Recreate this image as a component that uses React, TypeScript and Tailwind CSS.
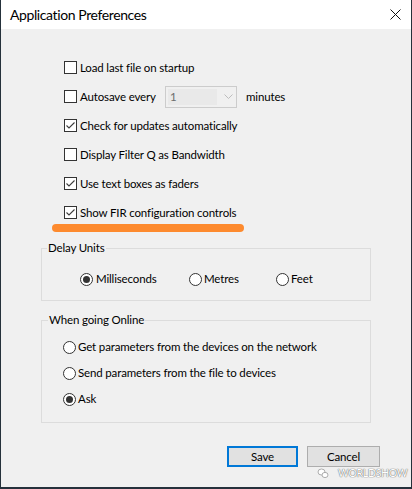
import React from 'react'

const font = { fontFamily: '"Segoe UI", Lato, "Liberation Sans", sans-serif' }

function CheckBox({ checked }: { checked?: boolean }) {
  return (
    <span className="w-[13px] h-[13px] border border-[#333333] bg-white flex items-center justify-center shrink-0">
      {checked && (
        <svg width="11" height="11" viewBox="0 0 11 11" fill="none" stroke="#3c3c3c" strokeWidth="1.1">
          <path d="M1.5 5.5 L4 8 L9.5 2.5" />
        </svg>
      )}
    </span>
  )
}

function Radio({ checked }: { checked?: boolean }) {
  return (
    <span className="w-[13px] h-[13px] rounded-full border border-[#333333] bg-white flex items-center justify-center shrink-0">
      {checked && <span className="w-[7px] h-[7px] rounded-full bg-[#333333]" />}
    </span>
  )
}

function CheckRow({ label, checked }: { label: string; checked?: boolean }) {
  return (
    <div className="h-[29px] flex items-center gap-[3px]">
      <CheckBox checked={checked} />
      <span>{label}</span>
    </div>
  )
}

export default function App() {
  return (
    <div
      className="w-[412px] h-[489px] bg-[#f0f0f0] border-l border-r border-b-2 border-[#25313b] flex flex-col text-[11.5px] tracking-[-0.15px] text-black relative"
      style={font}
    >
      {/* Title bar */}
      <div className="h-[29px] bg-white flex items-center justify-between pl-[9px] pr-[10px] shrink-0">
        <span className="text-[14px] tracking-[-0.4px] leading-none">Application Preferences</span>
        <svg width="11" height="11" viewBox="0 0 11 11" stroke="#111" strokeWidth="1">
          <line x1="0.5" y1="0.5" x2="10.5" y2="10.5" />
          <line x1="10.5" y1="0.5" x2="0.5" y2="10.5" />
        </svg>
      </div>

      {/* Checkboxes */}
      <div className="pt-[24px] pl-[63px] flex flex-col">
        <CheckRow label="Load last file on startup" />
        <div className="h-[29px] flex items-center gap-[3px]">
          <CheckBox />
          <span className="w-[82px]">Autosave every</span>
          <div className="w-[72px] h-[22px] border border-[#cccccc] bg-[#f0f0f0] flex items-center p-[2px]">
            <div className="w-[49px] h-full bg-[#e9e9e9] text-[#6d6d6d] pl-[2px] flex items-center">1</div>
            <svg className="ml-[7px]" width="9" height="6" viewBox="0 0 9 6" fill="none" stroke="#bdbdbd" strokeWidth="1">
              <path d="M0.5 0.5 L4.5 4.5 L8.5 0.5" />
            </svg>
          </div>
          <span className="ml-[6px]">minutes</span>
        </div>
        <CheckRow label="Check for updates automatically" checked />
        <CheckRow label="Display Filter Q as Bandwidth" />
        <CheckRow label="Use text boxes as faders" checked />
        <CheckRow label="Show FIR configuration controls" checked />
      </div>

      {/* Orange highlight */}
      <div className="-mt-[3px] ml-[51px] w-[192px] h-[8px] rounded-full bg-[#fd8a2e] shrink-0" />

      {/* Groups */}
      <div className="px-[40px] pt-[8px] flex flex-col">
        <fieldset className="border border-[#dcdcdc] pt-[13px] pb-[11px]">
          <legend className="ml-[5px] px-[1px] leading-[16px]">Delay Units</legend>
          <div className="h-[20px] pl-[38px] flex items-center">
            <div className="w-[109px] flex items-center gap-[3px]">
              <Radio checked />
              <span>Milliseconds</span>
            </div>
            <div className="w-[87px] flex items-center gap-[2px]">
              <Radio />
              <span>Metres</span>
            </div>
            <div className="flex items-center gap-[2px]">
              <Radio />
              <span>Feet</span>
            </div>
          </div>
        </fieldset>

        <fieldset className="mt-[11px] border border-[#dcdcdc] pt-[6px] pb-[10px]">
          <legend className="ml-[6px] px-[1px] leading-[16px]">When going Online</legend>
          <div className="pl-[21px] flex flex-col">
            <div className="h-[26px] flex items-center gap-[2px]">
              <Radio />
              <span>Get parameters from the devices on the network</span>
            </div>
            <div className="h-[26px] flex items-center gap-[2px]">
              <Radio />
              <span>Send parameters from the file to devices</span>
            </div>
            <div className="h-[26px] flex items-center gap-[2px]">
              <Radio checked />
              <span>Ask</span>
            </div>
          </div>
        </fieldset>
      </div>

      {/* Buttons */}
      <div className="mt-[23px] flex justify-end gap-[9px] pr-[31px]">
        <button className="w-[71px] h-[21px] border-2 border-[#0078d7] bg-[#e1e1e1] flex items-center justify-center">
          Save
        </button>
        <button className="w-[73px] h-[21px] border border-[#adadad] bg-[#e1e1e1] flex items-center justify-center">
          Cancel
        </button>
      </div>

      {/* Watermark */}
      <div className="absolute left-[316px] top-[467px] flex items-center gap-[9px] whitespace-nowrap text-white text-[10.5px] leading-[12px] tracking-[-0.3px] [text-shadow:0_0_1px_#666,0_0_1px_#666]">
        <svg width="12" height="11" viewBox="0 0 12 11" fill="none" stroke="#999" strokeWidth="0.8">
          <ellipse cx="4.5" cy="4" rx="3.5" ry="3" fill="#fff" />
          <ellipse cx="8" cy="7" rx="3" ry="2.6" fill="#fff" />
        </svg>
        <span>WORLDSHOW</span>
      </div>
    </div>
  )
}
